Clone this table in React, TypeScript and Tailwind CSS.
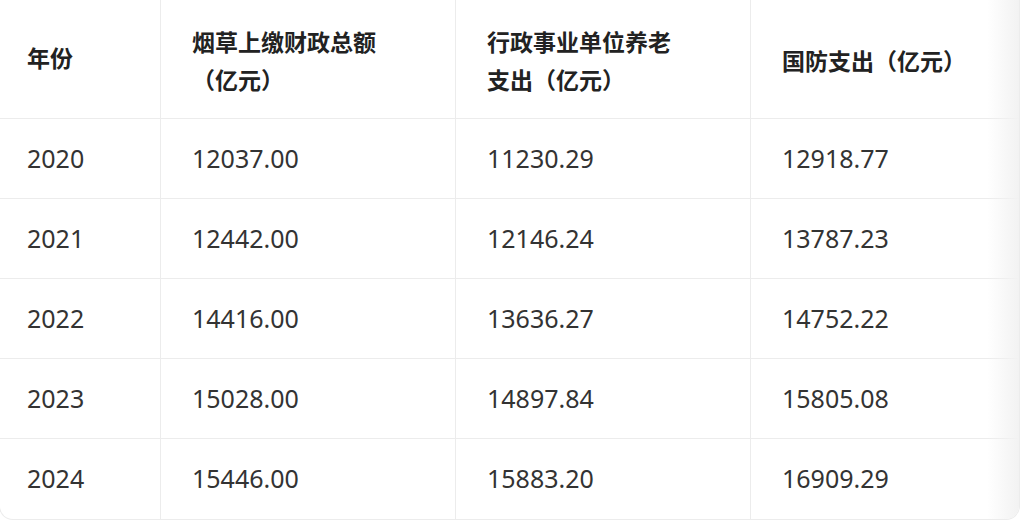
const headers = [
  ['年份'],
  ['烟草上缴财政总额', '（亿元）'],
  ['行政事业单位养老', '支出（亿元）'],
  ['国防支出（亿元）'],
];

const rows = [
  ['2020', '12037.00', '11230.29', '12918.77'],
  ['2021', '12442.00', '12146.24', '13787.23'],
  ['2022', '14416.00', '13636.27', '14752.22'],
  ['2023', '15028.00', '14897.84', '15805.08'],
  ['2024', '15446.00', '15883.20', '16909.29'],
];

// first column has less left padding and no divider
const cellCls = [
  'w-[160px] pl-[27px]',
  'w-[295px] pl-[31px] border-l border-[#ececec]',
  'w-[295px] pl-[31px] border-l border-[#ececec]',
  'flex-1 pl-[31px] border-l border-[#ececec]',
];

export default function App() {
  return (
    <div className="w-[1024px] h-[526px] bg-white overflow-hidden font-['Noto_Sans','Noto_Sans_CJK_SC',sans-serif]">
      <div className="relative w-[1021px] -ml-px border border-t-0 border-[#ececec] rounded-b-[14px] overflow-hidden">
        {/* header */}
        <div className="flex h-[119px] border-b border-[#ececec]">
          {headers.map((h, i) => (
            <div
              key={i}
              className={`${cellCls[i]} flex flex-col justify-center ${i === 0 ? 'pb-[2px]' : 'pt-[3px]'} text-[23px] leading-[38px] font-bold text-[#222]`}
            >
              {h.map((line, j) => (
                <span key={j}>{line}</span>
              ))}
            </div>
          ))}
        </div>

        {rows.map((r, ri) => (
          <div key={ri} className={`flex h-[80px] ${ri < rows.length - 1 ? 'border-b border-[#ececec]' : ''}`}>
            {r.map((c, ci) => (
              <div key={ci} className={`${cellCls[ci]} flex items-center text-[25px] text-[#333]`}>
                {c}
              </div>
            ))}
          </div>
        ))}

        {/* scroll fade on the right edge */}
        <div className="absolute top-0 right-0 bottom-0 w-[32px] bg-gradient-to-r from-transparent to-[#f2f2f2] pointer-events-none" />
      </div>
    </div>
  );
}
